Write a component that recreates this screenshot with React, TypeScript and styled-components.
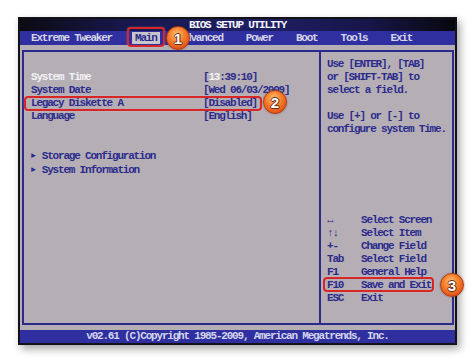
import React from "react";
import styled, { createGlobalStyle } from "styled-components";

const BLUE = "#2b2b8c";
const GREY = "#b5afb5";
const BAR = "#2f2fa0";

const GlobalStyle = createGlobalStyle`
  html, body {
    margin: 0;
    padding: 0;
    background: #ffffff;
  }
  body {
    width: 474px;
    height: 364px;
    overflow: hidden;
  }
`;

const Page = styled.div`
  position: relative;
  width: 474px;
  height: 364px;
  padding: 17px 0 0 18px;
  box-sizing: border-box;
  font-family: "Liberation Mono", "DejaVu Sans Mono", monospace;
  font-size: 11px;
  font-weight: bold;
  letter-spacing: -1.2px;
`;

const Screen = styled.div`
  width: 439px;
  height: 328px;
  box-sizing: border-box;
  border: 2px solid #121218;
  display: flex;
  flex-direction: column;
  box-shadow: 3px 4px 8px rgba(0, 0, 0, 0.35);
`;

const TitleBar = styled.div`
  height: 12px;
  line-height: 12px;
  text-align: center;
  color: #f4f4fa;
  background: linear-gradient(90deg, #0b0b12 0%, #18184e 25%, #1f1f64 55%, #16164a 80%, #08080e 100%);
`;

const MenuBar = styled.div`
  height: 14px;
  display: flex;
  gap: 16px;
  padding-left: 7.5px;
  background: ${BAR};
`;

const MenuItem = styled.div<{ $active?: boolean }>`
  padding: 0 3.5px;
  margin: 1px 0;
  line-height: 12px;
  color: ${(p) => (p.$active ? BLUE : "#d6d6e6")};
  background: ${(p) => (p.$active ? "#c9c5cc" : "transparent")};
`;

const Body = styled.div`
  flex: 1;
  background: ${GREY};
  padding: 5px 1px 5px 2px;
`;

const Frame = styled.div`
  height: 100%;
  box-sizing: border-box;
  border: 2px solid ${BLUE};
  display: grid;
  grid-template-columns: 295px 133px;
`;

const LeftPanel = styled.div`
  padding: 6px 0 0 7px;
  color: ${BLUE};
  line-height: 13px;
`;

const Row = styled.div<{ $gap?: number }>`
  display: grid;
  grid-template-columns: 172px auto;
  margin-top: ${(p) => (p.$gap ?? 0) * 13}px;
  white-space: pre;
`;

const Hi = styled.span`
  color: #f2f2f6;
`;

const SubMenu = styled.div<{ $gap?: number }>`
  margin-top: ${(p) => (p.$gap ?? 0) * 13}px;
  white-space: pre;
`;

const Arrow = styled.span`
  display: inline-block;
  width: 10.8px;
  font-size: 8px;
  letter-spacing: 0;
  vertical-align: 1px;
`;

const RightPanel = styled.div`
  border-left: 2px solid ${BLUE};
  padding: 6px 0 18px 6px;
  display: flex;
  flex-direction: column;
  justify-content: space-between;
  color: ${BLUE};
  line-height: 13px;
`;

const HelpLine = styled.div<{ $gap?: boolean }>`
  margin-top: ${(p) => (p.$gap ? 13 : 0)}px;
  white-space: pre;
`;

const Legend = styled.div`
  display: grid;
  grid-template-columns: 34px auto;
  white-space: pre;
`;

const Footer = styled.div`
  height: 13px;
  line-height: 13px;
  text-align: center;
  color: #d4d6ee;
  background: ${BAR};
  white-space: pre;
`;

const Callout = styled.div<{ $x: number; $y: number; $w: number; $h: number }>`
  position: absolute;
  left: ${(p) => p.$x}px;
  top: ${(p) => p.$y}px;
  width: ${(p) => p.$w}px;
  height: ${(p) => p.$h}px;
  box-sizing: border-box;
  border: 2px solid #d82626;
  border-radius: 4px;
  box-shadow: 0 0 1px rgba(255, 255, 255, 0.7);
`;

const Badge = styled.div<{ $x: number; $y: number }>`
  position: absolute;
  left: ${(p) => p.$x - 12}px;
  top: ${(p) => p.$y - 12}px;
  width: 24px;
  height: 24px;
  border-radius: 50%;
  box-sizing: border-box;
  border: 1px solid #b8380e;
  background: radial-gradient(circle at 45% 35%, #ffc27a 0%, #f5812c 40%, #e0541a 75%, #b63810 100%);
  box-shadow: 0 0 2px rgba(0, 0, 0, 0.35);
  display: flex;
  align-items: center;
  justify-content: center;
  font-family: "Liberation Sans", Arial, sans-serif;
  font-weight: bold;
  font-size: 15px;
  letter-spacing: 0;
  color: #ffffff;
  text-shadow: -1px 0 #6a2a10, 1px 0 #6a2a10, 0 -1px #6a2a10, 0 1px #6a2a10;
`;

const menu = ["Extreme Tweaker", "Main", "Advanced", "Power", "Boot", "Tools", "Exit"];

const legend: [string, string][] = [
  ["↔", "Select Screen"],
  ["↑↓", "Select Item"],
  ["+-", "Change Field"],
  ["Tab", "Select Field"],
  ["F1", "General Help"],
  ["F10", "Save and Exit"],
  ["ESC", "Exit"],
];

export default function App() {
  return (
    <Page>
      <GlobalStyle />
      <Screen>
        <TitleBar>BIOS SETUP UTILITY</TitleBar>
        <MenuBar>
          {menu.map((m) => (
            <MenuItem key={m} $active={m === "Main"}>
              {m}
            </MenuItem>
          ))}
        </MenuBar>
        <Body>
          <Frame>
            <LeftPanel>
              <Row $gap={1}>
                <Hi>System Time</Hi>
                <span>
                  [<Hi>13</Hi>:39:10]
                </span>
              </Row>
              <Row>
                <span>System Date</span>
                <span>[Wed 06/03/2009]</span>
              </Row>
              <Row>
                <span>Legacy Diskette A</span>
                <span>[Disabled]</span>
              </Row>
              <Row>
                <span>Language</span>
                <span>[English]</span>
              </Row>
              <SubMenu $gap={2}>
                <Arrow>►</Arrow>Storage Configuration
              </SubMenu>
              <SubMenu>
                <Arrow>►</Arrow>System Information
              </SubMenu>
            </LeftPanel>
            <RightPanel>
              <div>
                <HelpLine>Use [ENTER], [TAB]</HelpLine>
                <HelpLine>or [SHIFT-TAB] to</HelpLine>
                <HelpLine>select a field.</HelpLine>
                <HelpLine $gap>Use [+] or [-] to</HelpLine>
                <HelpLine>configure system Time.</HelpLine>
              </div>
              <Legend>
                {legend.map(([k, d]) => (
                  <React.Fragment key={k}>
                    <span>{k}</span>
                    <span>{d}</span>
                  </React.Fragment>
                ))}
              </Legend>
            </RightPanel>
          </Frame>
        </Body>
        <Footer>v02.61 (C)Copyright 1985-2009, American Megatrends, Inc.</Footer>
      </Screen>

      <Callout $x={127} $y={27} $w={38} $h={20} />
      <Callout $x={24} $y={96} $w={238} $h={15} />
      <Callout $x={323} $y={277} $w={111} $h={15} />
      <Badge $x={178} $y={38}>1</Badge>
      <Badge $x={275} $y={102}>2</Badge>
      <Badge $x={452} $y={285}>3</Badge>
    </Page>
  );
}
